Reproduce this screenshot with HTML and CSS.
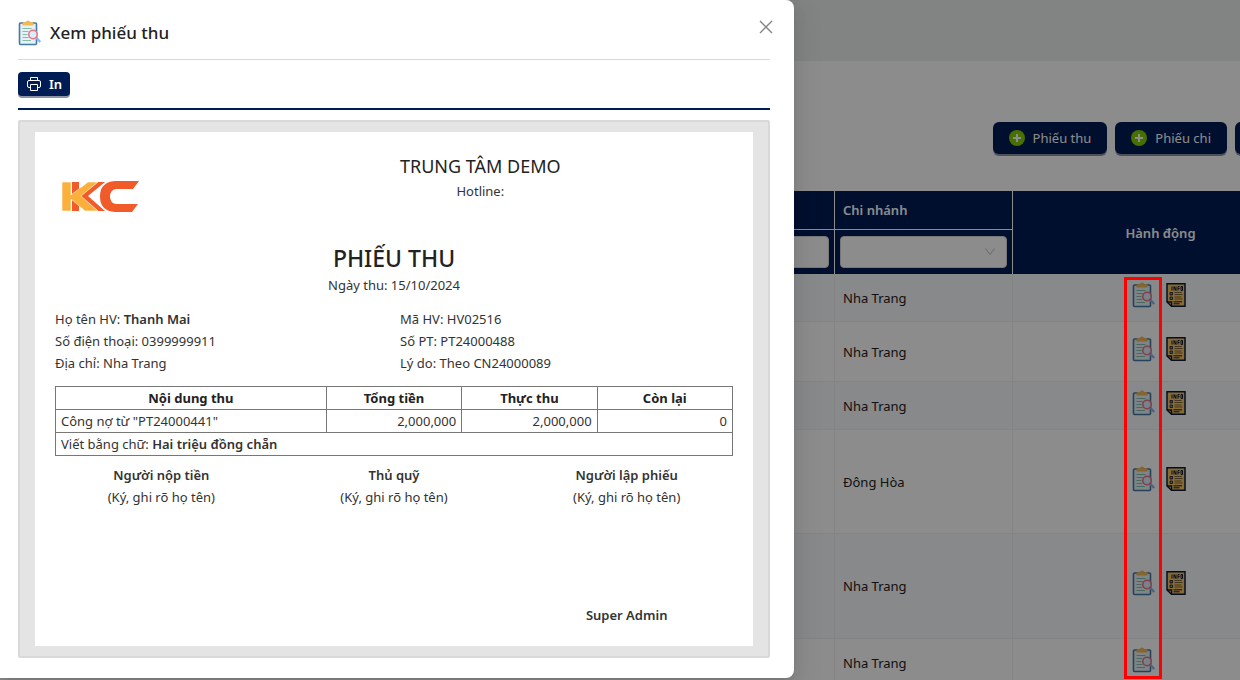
FILE: index.html
```html
<!DOCTYPE html>
<html lang="vi">
<head>
  <meta charset="UTF-8" />
  <meta name="viewport" content="width=device-width, initial-scale=1.0" />
  <title>Xem phiếu thu</title>
  <link rel="stylesheet" href="styles.css">
</head>
<body>
  <svg class="sprite" aria-hidden="true">
    <symbol id="icon-view" viewBox="0 0 24 26">
      <rect x="1.5" y="3" width="17" height="21.5" rx="1" fill="#e6f0f7" stroke="#4679a3" stroke-width="1.6"/>
      <path d="M4.500 5.500V3.500Q4.500 2 6 2H7.500Q8.500.5 10 .5T12.500 2h1.500Q15.500 2 15.500 3.500v2z" fill="#f0b856"/>
      <path d="M4.500 8.500h9M4.500 11.500h6M4.500 14.500h5M4.500 17.500h6M4.500 20.500h8.500" stroke="#7fbfa5" stroke-width="1"/>
      <circle cx="15" cy="14.500" r="4.200" fill="#d9efff" stroke="#ee7480" stroke-width="1.600"/>
      <path d="M18.500 18l3.700 4" stroke="#84b4f5" stroke-width="2.400"/>
    </symbol>
    <symbol id="icon-info" viewBox="0 0 20 24">
      <path d="M1 .8h18v22.400H5.500L1 19z" fill="#f5c462" stroke="#0d1838" stroke-width="1.500"/>
      <path d="M1 19h4.500v4" fill="none" stroke="#0d1838" stroke-width="1.500"/>
      <path d="M6 3.500v4M8 7.500v-4l2 4v-4M12 7.500v-4h1.500M12 5.500h1.500M15 3.500h1.500v4H15z" fill="none" stroke="#0d1838" stroke-width="1"/>
      <path d="M4 9.500h2.500v2.500H4z" fill="#d9665b" stroke="#0d1838" stroke-width=".8"/>
      <path d="M4 14h2.500v2.500H4z" fill="#55a9c9" stroke="#0d1838" stroke-width=".8"/>
      <path d="M8.500 9.500h7M8.500 11.500h8M8.500 14h7M8.500 16h8" stroke="#7a633a" stroke-width="1"/>
      <path d="M7.500 18.800h8.500M7.500 20.800h6" stroke="#0d1838" stroke-width="1"/>
    </symbol>
    <symbol id="icon-plus" viewBox="0 0 16 16">
      <circle cx="8" cy="8" r="8" fill="#80cc00"/>
      <path d="M8 4v8M4 8h8" stroke="#fff" stroke-width="2"/>
    </symbol>
  </svg>

  <div class="page">
    <header class="topbar"></header>
    <div class="toolbar">
      <button class="btn"><svg width="16" height="16"><use href="#icon-plus"/></svg>Phiếu thu</button>
      <button class="btn"><svg width="16" height="16"><use href="#icon-plus"/></svg>Phiếu chi</button>
      <button class="btn btn-more" aria-label="Thêm"></button>
    </div>
    <table class="list">
      <colgroup>
        <col>
        <col class="col-branch">
        <col class="col-action">
      </colgroup>
      <thead>
        <tr>
          <th></th>
          <th>Chi nhánh</th>
          <th class="action-head" rowspan="2">Hành động</th>
        </tr>
        <tr class="filters">
          <th><input type="text" aria-label="Tìm kiếm"></th>
          <th>
            <div class="select">
              <select aria-label="Chi nhánh"><option></option></select>
              <svg width="12" height="12" viewBox="0 0 12 12"><path d="M1.500 2.500l4.500 6 4.500-6" fill="none" stroke="#bfbfbf"/></svg>
            </div>
          </th>
        </tr>
      </thead>
      <tbody>
        <tr class="h-sm odd">
          <td></td><td>Nha Trang</td>
          <td><div class="actions"><svg width="24" height="26"><use href="#icon-view"/></svg><svg width="20" height="24"><use href="#icon-info"/></svg></div></td>
        </tr>
        <tr class="h-md">
          <td></td><td>Nha Trang</td>
          <td><div class="actions"><svg width="24" height="26"><use href="#icon-view"/></svg><svg width="20" height="24"><use href="#icon-info"/></svg></div></td>
        </tr>
        <tr class="h-sm odd">
          <td></td><td>Nha Trang</td>
          <td><div class="actions"><svg width="24" height="26"><use href="#icon-view"/></svg><svg width="20" height="24"><use href="#icon-info"/></svg></div></td>
        </tr>
        <tr class="h-lg">
          <td></td><td>Đông Hòa</td>
          <td><div class="actions"><svg width="24" height="26"><use href="#icon-view"/></svg><svg width="20" height="24"><use href="#icon-info"/></svg></div></td>
        </tr>
        <tr class="h-xl odd">
          <td></td><td>Nha Trang</td>
          <td><div class="actions"><svg width="24" height="26"><use href="#icon-view"/></svg><svg width="20" height="24"><use href="#icon-info"/></svg></div></td>
        </tr>
        <tr class="h-sm">
          <td></td><td>Nha Trang</td>
          <td><div class="actions"><svg width="24" height="26"><use href="#icon-view"/></svg></div></td>
        </tr>
      </tbody>
    </table>
  </div>

  <div class="mask"></div>
  <div class="highlight"></div>

  <div class="modal" role="dialog" aria-labelledby="modalTitle">
    <button class="close" aria-label="Đóng">
      <svg width="14" height="14" viewBox="0 0 14 14"><path d="M1 1l12 12M13 1L1 13" stroke="#858585" stroke-width="1.400"/></svg>
    </button>
    <div class="modal-head">
      <svg width="24" height="26"><use href="#icon-view"/></svg>
      <h1 id="modalTitle">Xem phiếu thu</h1>
    </div>
    <div class="modal-tools">
      <button class="btn btn-sm">
        <svg width="14" height="14" viewBox="0 0 14 14" fill="none" stroke="#fff">
          <path d="M3.500 3.500v-3h7v3M3.500 10.500h-1.500Q.5 10.500.5 9V5Q.5 3.500 2 3.500h10Q13.500 3.500 13.500 5v4q0 1.500-1.500 1.500h-1.500M3.500 7.500h7v6h-7z"/>
        </svg>In
      </button>
    </div>

    <div class="preview">
      <div class="paper">
        <div class="paper-head">
          <svg class="logo" width="79" height="33" viewBox="0 0 79 33">
            <path d="M11 2h7v8l-7 7zM11 31h7v-7l-7-6z" fill="#f15a29"/>
            <path d="M37 2h7L27 16l17 15h-7L19 16z" fill="#f15a29"/>
            <path d="M1 2h9v13L27 2h10L20 16l17 15H24L10 19v12H1z" fill="#fbb03b" stroke="#fff" stroke-width=".6"/>
            <path d="M78 1H54Q39 2 39 16.500T54 32h17l6-8H55q-6-1-6-7.500T55 9h17z" fill="#f15a29"/>
          </svg>
          <div class="center-info">
            <h2>TRUNG TÂM DEMO</h2>
            <div>Hotline:</div>
          </div>
        </div>
        <div class="receipt-title">
          <h3>PHIẾU THU</h3>
          <div>Ngày thu: 15/10/2024</div>
        </div>
        <div class="info">
          <div>Họ tên HV: <b>Thanh Mai</b></div>
          <div>Mã HV: HV02516</div>
          <div>Số điện thoại: 0399999911</div>
          <div>Số PT: PT24000488</div>
          <div>Địa chỉ: Nha Trang</div>
          <div>Lý do: Theo CN24000089</div>
        </div>
        <table class="receipt">
          <thead>
            <tr><th class="col-content">Nội dung thu</th><th>Tổng tiền</th><th>Thực thu</th><th>Còn lại</th></tr>
          </thead>
          <tbody>
            <tr><td>Công nợ từ "PT24000441"</td><td class="num">2,000,000</td><td class="num">2,000,000</td><td class="num">0</td></tr>
            <tr><td colspan="4">Viết bằng chữ: <b>Hai triệu đồng chẵn</b></td></tr>
          </tbody>
        </table>
        <div class="signs">
          <div><b>Người nộp tiền</b><br>(Ký, ghi rõ họ tên)</div>
          <div><b>Thủ quỹ</b><br>(Ký, ghi rõ họ tên)</div>
          <div><b>Người lập phiếu</b><br>(Ký, ghi rõ họ tên)<b class="signer">Super Admin</b></div>
        </div>
      </div>
    </div>
  </div>
</body>
</html>
```
FILE: styles.css
```css
* {
  box-sizing: border-box;
}
body {
  margin: 0;
  min-height: 100vh;
  position: relative;
  overflow: hidden;
  font-family: "Segoe UI", "Noto Sans", sans-serif;
  font-size: 13px;
  line-height: 22px;
  color: #222;
  background-color: #fff;
}
h1, h2, h3 {
  margin: 0;
  font-weight: 500;
  color: #222;
}
b {
  font-weight: 600;
}
svg {
  flex: none;
  display: block;
}
.sprite {
  position: absolute;
  width: 0;
  height: 0;
}

/* page behind the modal */
.page {
  position: absolute;
  inset: 0;
  overflow: hidden;
}
.topbar {
  height: 61px;
  background-color: #ecf0ee;
}
.toolbar {
  display: flex;
  justify-content: flex-end;
  gap: 8px;
  margin: 61px -60px 37px 0;
}
.btn {
  display: flex;
  align-items: center;
  gap: 8px;
  height: 32px;
  padding: 0 16px;
  border: none;
  border-radius: 6px;
  background-color: #001c55;
  box-shadow: 0 2px 0 rgba(0, 16, 60, 0.45);
  color: #fff;
  font: inherit;
  cursor: pointer;
}
.btn-more {
  width: 65px;
}
.btn-sm {
  height: 24px;
  padding: 0 8px 0 9px;
  border-radius: 4px;
  font-weight: 600;
}
.list {
  width: calc(100% + 69px);
  table-layout: fixed;
  border-collapse: separate;
  border-spacing: 0;
}
.col-branch {
  width: 178px;
}
.col-action {
  width: 296px;
}
.list th {
  height: 39px;
  padding: 0 8px;
  text-align: left;
  font-weight: 600;
  color: #fff;
  background-color: #001c55;
  border-right: 1px solid #fff;
  border-bottom: 1px solid #fff;
}
.list .action-head {
  text-align: center;
  border-bottom: none;
}
.list .filters th {
  height: 44px;
  padding: 6px 5px;
  border-bottom: none;
}
.list input, .list select {
  display: block;
  width: 100%;
  height: 32px;
  border: 1px solid #d9d9d9;
  border-radius: 4px;
  background-color: #fff;
  appearance: none;
}
.select {
  position: relative;
}
.select svg {
  position: absolute;
  right: 11px;
  top: 10px;
}
.list td {
  padding: 0 8px;
  border-right: 1px solid #f0f0f0;
  border-bottom: 1px solid #f0f0f0;
}
.list .odd td {
  background-color: #f6f9fc;
}
.h-sm {
  height: 48px;
}
.h-md {
  height: 60px;
}
.h-lg {
  height: 104px;
}
.h-xl {
  height: 105px;
}
.actions {
  display: flex;
  align-items: center;
  gap: 10px;
  width: 58px;
  margin: 0 auto;
  padding-bottom: 6px;
}
.mask {
  position: absolute;
  inset: 0;
  background-color: rgba(0, 0, 0, 0.45);
}
.highlight {
  position: absolute;
  top: 277px;
  right: 78px;
  width: 38px;
  height: 402px;
  border: 3px solid #f00;
}

/* modal */
.modal {
  position: relative;
  width: 100%;
  max-width: 794px;
  padding: 16px 24px 20px 18px;
  background-color: #fff;
  border-radius: 0 8px 8px 0;
  box-shadow: 0 6px 16px rgba(0, 0, 0, 0.08), 0 3px 6px -4px rgba(0, 0, 0, 0.12), 0 9px 28px 8px rgba(0, 0, 0, 0.05);
}
.close {
  position: absolute;
  top: 16px;
  right: 17px;
  padding: 4px;
  border: none;
  background: none;
  cursor: pointer;
}
.modal-head {
  display: flex;
  align-items: center;
  gap: 8px;
  height: 44px;
  padding-bottom: 9px;
  border-bottom: 1px solid #d9d9d9;
}
.modal-head h1 {
  font-size: 17px;
}
.modal-tools {
  display: flex;
  padding: 12px 0;
  border-bottom: 2px solid #001c55;
}
.preview {
  margin-top: 10px;
  padding: 10px 15px;
  border: 2px solid #d9d9d9;
  border-radius: 2px;
  background-color: #e4e4e4;
}
.paper {
  min-height: 514px;
  padding: 20px;
  color: #333;
  background-color: #fff;
}
.paper-head, .info {
  display: grid;
  grid-template-columns: 1fr 1fr;
  column-gap: 12px;
}
.paper-head {
  min-height: 71px;
}
.logo {
  margin: 28px 0 0 6px;
}
.center-info {
  justify-self: start;
  text-align: center;
}
.center-info h2 {
  font-size: 18px;
  font-weight: 400;
  line-height: 28px;
}
.receipt-title {
  margin: 20px 0 12px;
  text-align: center;
}
.receipt-title h3 {
  font-size: 23px;
  line-height: 31px;
}
.receipt {
  width: 100%;
  margin: 12px 0 8px;
  table-layout: fixed;
  border-collapse: collapse;
}
.receipt th, .receipt td {
  height: 23px;
  padding: 0 5px;
  border: 1px solid #777;
}
.receipt th {
  font-weight: 700;
  color: #222;
}
.col-content {
  width: 40%;
}
.receipt .num {
  text-align: right;
}
.signs {
  display: grid;
  grid-template-columns: 1fr 1fr 1fr;
  column-gap: 20px;
  text-align: center;
}
.signer {
  display: block;
  margin-top: 96px;
}
```
